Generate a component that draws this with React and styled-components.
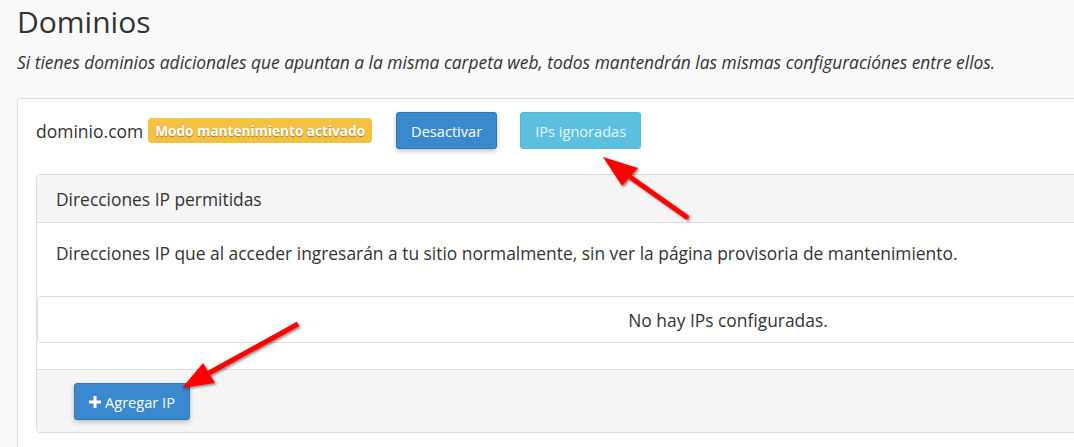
import React from 'react';
import styled, { createGlobalStyle } from 'styled-components';

const GlobalStyle = createGlobalStyle`
  html, body {
    margin: 0;
    padding: 0;
    background: #f9f9f9;
    overflow: hidden;
  }
  body {
    font-family: 'Open Sans', 'Liberation Sans', sans-serif;
    color: #333;
  }
`;

const Page = styled.div`
  position: relative;
  width: 1460px;
  padding: 0 0 0 17px;
  box-sizing: border-box;
`;

const Title = styled.h1`
  font-size: 30px;
  font-weight: 400;
  line-height: 40px;
  margin: 2px 0 0;
  color: #333;
`;

const Subtitle = styled.p`
  font-size: 17.4px;
  font-style: italic;
  line-height: 22px;
  margin: 9px 0 25px;
`;

const Panel = styled.div`
  background: #fff;
  border: 1px solid #ddd;
  border-radius: 4px;
  padding: 13px 18px 20px;
  width: 1422px;
  box-sizing: border-box;
`;

const DomainRow = styled.div`
  display: flex;
  align-items: center;
  margin-bottom: 25px;
`;

const DomainName = styled.span`
  font-size: 17.5px;
  line-height: 22px;
  margin-right: 5px;
`;

const Badge = styled.span`
  background: #f4c242;
  color: #fff;
  font-weight: 700;
  font-size: 13.6px;
  line-height: 25px;
  padding: 0 7px;
  border-radius: 4px;
  text-shadow: 0 1px 1px rgba(0, 0, 0, 0.35);
  margin-right: 24px;
`;

const Button = styled.button`
  font-family: inherit;
  font-size: 14.6px;
  height: 37px;
  padding: 0 14px;
  border-radius: 3px;
  border: 1px solid ${({ $info }) => ($info ? '#55b8d6' : '#2f74b5')};
  background: ${({ $info }) => ($info ? '#5bc0de' : '#3a88cd')};
  color: ${({ $info }) => ($info ? '#eaf6fb' : '#fff')};
  box-shadow: ${({ $info }) => ($info ? 'none' : '0 2px 5px rgba(0,0,0,0.25)')};
  margin-right: ${({ $gap }) => $gap || 0}px;
  display: inline-flex;
  align-items: center;
  gap: 4px;
  cursor: pointer;
`;

const InnerPanel = styled.div`
  border: 1px solid #ddd;
  border-radius: 4px;
  overflow: hidden;
`;

const InnerHeader = styled.div`
  background: #f5f5f5;
  border-bottom: 1px solid #ddd;
  height: 47px;
  display: flex;
  align-items: center;
  padding: 0 19px;
  font-size: 17.4px;
`;

const InnerBody = styled.div`
  padding: 19px 19px 32px;
  font-size: 17.4px;
  line-height: 22px;
`;

const EmptyTable = styled.div`
  border: 1px solid #ddd;
  border-radius: 4px;
  height: 45px;
  display: flex;
  align-items: center;
  justify-content: center;
  font-size: 17.4px;
  margin-bottom: 26px;
`;

const Footer = styled.div`
  background: #f5f5f5;
  border-top: 1px solid #ddd;
  padding: 13px 37px 12px;
`;

const Arrows = styled.svg`
  position: absolute;
  left: 0;
  top: 0;
  width: 1074px;
  height: 447px;
  pointer-events: none;
`;

const Plus = () => (
  <svg width="12" height="12" viewBox="0 0 12 12">
    <path d="M4.5 0h3v4.5H12v3H7.5V12h-3V7.5H0v-3h4.5z" fill="#fff" />
  </svg>
);

const Arrow = ({ tip, c1, c2, tail }) => (
  <g>
    <line
      x1={tail[0]}
      y1={tail[1]}
      x2={(c1[0] + c2[0]) / 2}
      y2={(c1[1] + c2[1]) / 2}
      stroke="#ff0000"
      strokeWidth="5"
    />
    <polygon points={`${tip[0]},${tip[1]} ${c1[0]},${c1[1]} ${c2[0]},${c2[1]}`} fill="#ff0000" />
  </g>
);

const App = () => (
  <>
    <GlobalStyle />
    <Page>
      <Title>Dominios</Title>
      <Subtitle>
        Si tienes dominios adicionales que apuntan a la misma carpeta web, todos mantendrán las
        mismas configuraciónes entre ellos.
      </Subtitle>
      <Panel>
        <DomainRow>
          <DomainName>dominio.com</DomainName>
          <Badge>Modo mantenimiento activado</Badge>
          <Button $gap={23}>Desactivar</Button>
          <Button $info>IPs ignoradas</Button>
        </DomainRow>
        <InnerPanel>
          <InnerHeader>Direcciones IP permitidas</InnerHeader>
          <InnerBody>
            Direcciones IP que al acceder ingresarán a tu sitio normalmente, sin ver la página
            provisoria de mantenimiento.
          </InnerBody>
          <EmptyTable>No hay IPs configuradas.</EmptyTable>
          <Footer>
            <Button>
              <Plus />
              Agregar IP
            </Button>
          </Footer>
        </InnerPanel>
      </Panel>
      <Arrows viewBox="0 0 1074 447">
        <defs>
          <filter id="sh" x="-20%" y="-20%" width="140%" height="140%">
            <feDropShadow dx="1.5" dy="1.5" stdDeviation="1.2" floodColor="#000" floodOpacity="0.45" />
          </filter>
        </defs>
        <g filter="url(#sh)">
          <Arrow tip={[603, 155]} c1={[638, 166]} c2={[622, 184]} tail={[688, 216]} />
          <Arrow tip={[182, 386]} c1={[203, 361]} c2={[215, 381]} tail={[298, 322]} />
        </g>
      </Arrows>
    </Page>
  </>
);

export default App;
